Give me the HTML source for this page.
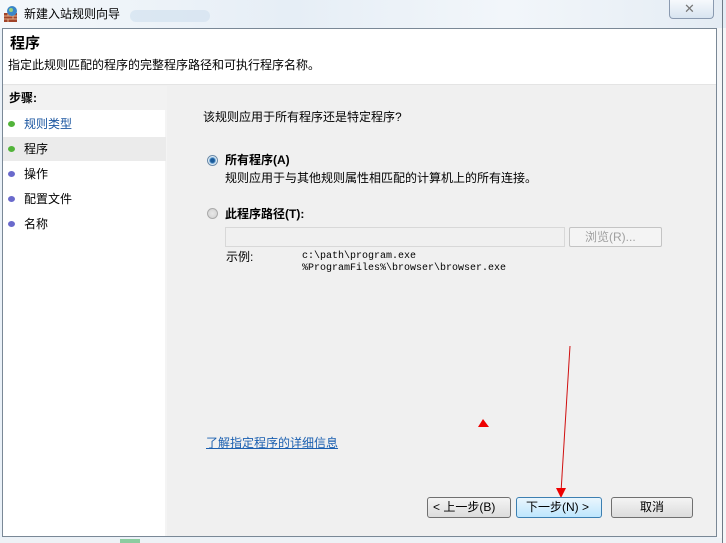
<!DOCTYPE html>
<html><head><meta charset="utf-8"><style>
*{margin:0;padding:0;box-sizing:border-box}
body{width:726px;height:543px;overflow:hidden;background:#eaf1f8;font-family:"Liberation Sans","Noto Sans CJK SC","WenQuanYi Zen Hei",sans-serif;font-size:12px;color:#000;position:relative}
.abs{position:absolute}
.t{position:absolute;white-space:nowrap;line-height:14px}
</style></head><body>
<div class="abs" style="left:0;top:0;width:726px;height:29px;background:linear-gradient(90deg,#f4f8fb,#e6eef6 40%,#f2f6fa 70%,#e4ecf4)"></div>
<div class="abs" style="left:130px;top:10px;width:80px;height:12px;background:#cfe0ee;border-radius:6px;opacity:.6"></div>
<svg class="abs" style="left:3px;top:5px" width="16" height="18"><rect x="1" y="8" width="13" height="9" fill="#a0442a"/><path d="M1 11h13M1 14h13M5 8v3M10 11v3M5 14v3" stroke="#e6b08a" stroke-width="1"/><circle cx="9" cy="6" r="5" fill="#3a86c8"/><circle cx="8" cy="5" r="2" fill="#9cd07a"/></svg>
<div class="t" style="left:24px;top:7px;font-size:12px">新建入站规则向导</div>
<div class="abs" style="left:669px;top:0;width:45px;height:19px;border:1px solid #8a9ab0;border-top:none;border-radius:0 0 4px 4px;background:linear-gradient(#f6f9fc,#d8e4f0)"></div>
<div class="t" style="left:684px;top:2px;font-size:13px;color:#777">✕</div>
<div class="abs" style="left:716px;top:28px;width:10px;height:515px;background:#f4f6f8"></div>
<div class="abs" style="left:722px;top:0;width:1px;height:543px;background:#6e7a86"></div>
<div class="abs" style="left:2px;top:28px;width:715px;height:509px;border:1px solid #7a8896;background:#f0f0f0"></div>
<div class="abs" style="left:3px;top:29px;width:713px;height:56px;background:#fff;border-bottom:1px solid #e4e4e4"></div>
<div class="t" style="left:10px;top:35px;font-size:15px;font-weight:bold;line-height:18px">程序</div>
<div class="t" style="left:8px;top:58px">指定此规则匹配的程序的完整程序路径和可执行程序名称。</div>
<div class="abs" style="left:3px;top:86px;width:164px;height:450px;background:#fff;border-right:2px solid #f4f4f4"></div>
<div class="abs" style="left:3px;top:86px;width:164px;height:24px;background:#f2f2f2"></div>
<div class="t" style="left:9px;top:91px;font-weight:bold">步骤:</div>
<div class="abs" style="left:3px;top:137px;width:163px;height:24px;background:#ebebeb"></div>
<div class="abs" style="left:8px;top:121px;width:7px;height:6px;border-radius:50%;background:#52b43a"></div>
<div class="abs" style="left:8px;top:146px;width:7px;height:6px;border-radius:50%;background:#52b43a"></div>
<div class="abs" style="left:8px;top:171px;width:7px;height:6px;border-radius:50%;background:#6a6acc"></div>
<div class="abs" style="left:8px;top:196px;width:7px;height:6px;border-radius:50%;background:#6a6acc"></div>
<div class="abs" style="left:8px;top:221px;width:7px;height:6px;border-radius:50%;background:#6a6acc"></div>
<div class="t" style="left:24px;top:117px;color:#1a55a0">规则类型</div>
<div class="t" style="left:24px;top:142px">程序</div>
<div class="t" style="left:24px;top:167px">操作</div>
<div class="t" style="left:24px;top:192px">配置文件</div>
<div class="t" style="left:24px;top:217px">名称</div>
<div class="t" style="left:203px;top:110px">该规则应用于所有程序还是特定程序?</div>
<div class="abs" style="left:207px;top:155px;width:11px;height:11px;border-radius:50%;border:1px solid #6a8aa8;background:radial-gradient(circle,#1a5a9a 0 2px,#7ab0dc 3px,#eef4fa 4px)"></div>
<div class="t" style="left:225px;top:153px;font-weight:bold">所有程序(A)</div>
<div class="t" style="left:225px;top:171px">规则应用于与其他规则属性相匹配的计算机上的所有连接。</div>
<div class="abs" style="left:207px;top:208px;width:11px;height:11px;border-radius:50%;border:1px solid #aaa;background:radial-gradient(circle,#e8e8e8,#d0d0d0)"></div>
<div class="t" style="left:225px;top:207px;font-weight:bold">此程序路径(T):</div>
<div class="abs" style="left:225px;top:227px;width:340px;height:20px;border:1px solid #d8d8d8;background:#f0f0f0"></div>
<div class="abs" style="left:569px;top:227px;width:93px;height:20px;border:1px solid #c4c4c4;border-radius:2px;background:#f4f4f4"></div>
<div class="t" style="left:585px;top:230px;color:#a0a0a0">浏览(R)...</div>
<div class="t" style="left:226px;top:250px">示例:</div>
<div class="t" style="left:302px;top:251px;font-family:'Liberation Mono',monospace;font-size:10px;line-height:12px">c:\path\program.exe<br>%ProgramFiles%\browser\browser.exe</div>
<div class="t" style="left:206px;top:436px;color:#1a5fb0;text-decoration:underline">了解指定程序的详细信息</div>
<svg class="abs" style="left:470px;top:340px" width="110" height="160"><path d="M13 79 L19 87 L8 87Z" fill="#e00"/><path d="M100 6 L91 152" stroke="#d01010" stroke-width="1"/><path d="M86 148 L96 148 L91 158Z" fill="#e00"/></svg>
<div class="abs" style="left:427px;top:497px;width:84px;height:21px;border:1px solid #707070;border-radius:3px;background:linear-gradient(#f4f4f4,#dcdcdc)"></div>
<div class="t" style="left:433px;top:500px">&lt; 上一步(B)</div>
<div class="abs" style="left:516px;top:497px;width:86px;height:21px;border:1px solid #3c7fb1;border-radius:3px;background:linear-gradient(#eaf6fd,#bee6fd)"></div>
<div class="t" style="left:526px;top:500px">下一步(N) &gt;</div>
<div class="abs" style="left:611px;top:497px;width:82px;height:21px;border:1px solid #707070;border-radius:3px;background:linear-gradient(#f4f4f4,#dcdcdc)"></div>
<div class="t" style="left:640px;top:500px">取消</div>
<div class="abs" style="left:0;top:538px;width:722px;height:5px;background:#eef2f6"></div>
<div class="abs" style="left:120px;top:539px;width:20px;height:4px;background:#8ccca0"></div>
</body></html>
